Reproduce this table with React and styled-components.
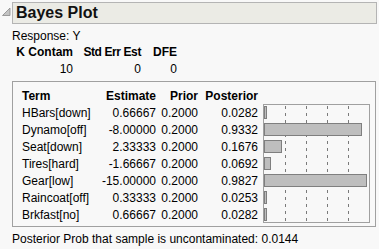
import React from "react";
import styled, { createGlobalStyle } from "styled-components";

const Global = createGlobalStyle`
  html, body { margin: 0; padding: 0; background: #f8f8f8; }
  body { font-family: "Liberation Sans", Arial, sans-serif; font-size: 12px; color: #000; }
`;

const Page = styled.div`
  width: 379px;
  height: 249px;
  padding: 2px 2px 0 0;
  box-sizing: border-box;
  overflow: hidden;
`;

const OutlineHeader = styled.div`
  display: flex;
  align-items: center;
  height: 22px;
`;

const Disclosure = styled.svg`
  width: 12px;
  height: 22px;
  flex: none;
`;

const TitleBox = styled.div`
  flex: 1;
  height: 22px;
  box-sizing: border-box;
  border: 1px solid #b4b4b4;
  background: #ebebe5;
  display: flex;
  align-items: center;
  padding-left: 3px;
  font-size: 16px;
  font-weight: bold;
  color: #111;
`;

const Body = styled.div`
  padding-left: 12px;
`;

const Response = styled.div`
  height: 14px;
  line-height: 14px;
  margin-top: 5px;
`;

const StatsGrid = styled.div`
  display: grid;
  grid-template-columns: 61px 68px 36px;
  grid-auto-rows: 17px;
  align-items: center;
  text-align: right;
`;

const StatHead = styled.div`
  font-weight: bold;
  letter-spacing: ${(p) => p.$tight || 0}px;
`;

const Frame = styled.div`
  margin-top: 4px;
  width: 364px;
  box-sizing: border-box;
  border: 1px solid #a0a0a0;
  padding: 6px 0 3px 9px;
`;

const Table = styled.div`
  display: grid;
  grid-template-columns: 74px 60px 42px 60px 5px 107px;
  grid-template-rows: 16px repeat(7, 17px);
`;

const Cell = styled.div`
  display: flex;
  align-items: center;
  justify-content: ${(p) => (p.$left ? "flex-start" : "flex-end")};
  font-weight: ${(p) => (p.$head ? "bold" : "normal")};
  white-space: nowrap;
`;

const ChartCell = styled.div`
  grid-column: 6;
  grid-row: 2 / span 7;
  border: 1px solid #a0a0a0;
  box-sizing: border-box;
  height: 119px;
`;

const Footer = styled.div`
  margin-top: 4px;
  height: 16px;
  line-height: 16px;
`;

const rows = [
  ["HBars[down]", "0.66667", "0.2000", "0.0282"],
  ["Dynamo[off]", "-8.00000", "0.2000", "0.9332"],
  ["Seat[down]", "2.33333", "0.2000", "0.1676"],
  ["Tires[hard]", "-1.66667", "0.2000", "0.0692"],
  ["Gear[low]", "-15.00000", "0.2000", "0.9827"],
  ["Raincoat[off]", "0.33333", "0.2000", "0.0253"],
  ["Brkfast[no]", "0.66667", "0.2000", "0.0282"],
];

function Chart() {
  const W = 105;
  const H = 117;
  return (
    <svg width={W} height={H} style={{ display: "block" }}>
      {[0.2, 0.4, 0.6, 0.8].map((t) => {
        const x = Math.round(t * W) + 0.5;
        return (
          <line key={t} x1={x} x2={x} y1={1} y2={H} stroke="#7a7a7a" strokeWidth="1" strokeDasharray="3 4" />
        );
      })}
      {rows.map((r, i) => {
        const v = parseFloat(r[3]);
        const w = Math.max(2, Math.round(v * W));
        return (
          <rect key={i} x={0.5} y={i * 17 + 1.5} width={w - 1} height={12} fill="#bebebe" stroke="#7f7f7f" strokeWidth="1" />
        );
      })}
    </svg>
  );
}

export default function App() {
  return (
    <Page>
      <Global />
      <OutlineHeader>
        <Disclosure viewBox="0 0 12 22">
          <polygon points="10,6 10,13.5 2.5,13.5" fill="#c4c4c4" stroke="#8a8a8a" strokeWidth="0.8" />
        </Disclosure>
        <TitleBox>Bayes Plot</TitleBox>
      </OutlineHeader>
      <Body>
        <Response>Response: Y</Response>
        <StatsGrid>
          <StatHead>K Contam</StatHead>
          <StatHead $tight={-0.4}>Std Err Est</StatHead>
          <StatHead>DFE</StatHead>
          <div>10</div>
          <div>0</div>
          <div>0</div>
        </StatsGrid>
        <Frame>
          <Table>
            <Cell $left $head>Term</Cell>
            <Cell $head>Estimate</Cell>
            <Cell $head>Prior</Cell>
            <Cell $head>Posterior</Cell>
            <div />
            <div />
            {rows.map((r, i) => (
              <React.Fragment key={i}>
                <Cell $left>{r[0]}</Cell>
                <Cell>{r[1]}</Cell>
                <Cell>{r[2]}</Cell>
                <Cell>{r[3]}</Cell>
                {i === 0 ? (
                  <>
                    <div style={{ gridRow: "2 / span 7", gridColumn: 5 }} />
                    <ChartCell>
                      <Chart />
                    </ChartCell>
                  </>
                ) : null}
              </React.Fragment>
            ))}
          </Table>
        </Frame>
        <Footer>Posterior Prob that sample is uncontaminated: 0.0144</Footer>
      </Body>
    </Page>
  );
}
